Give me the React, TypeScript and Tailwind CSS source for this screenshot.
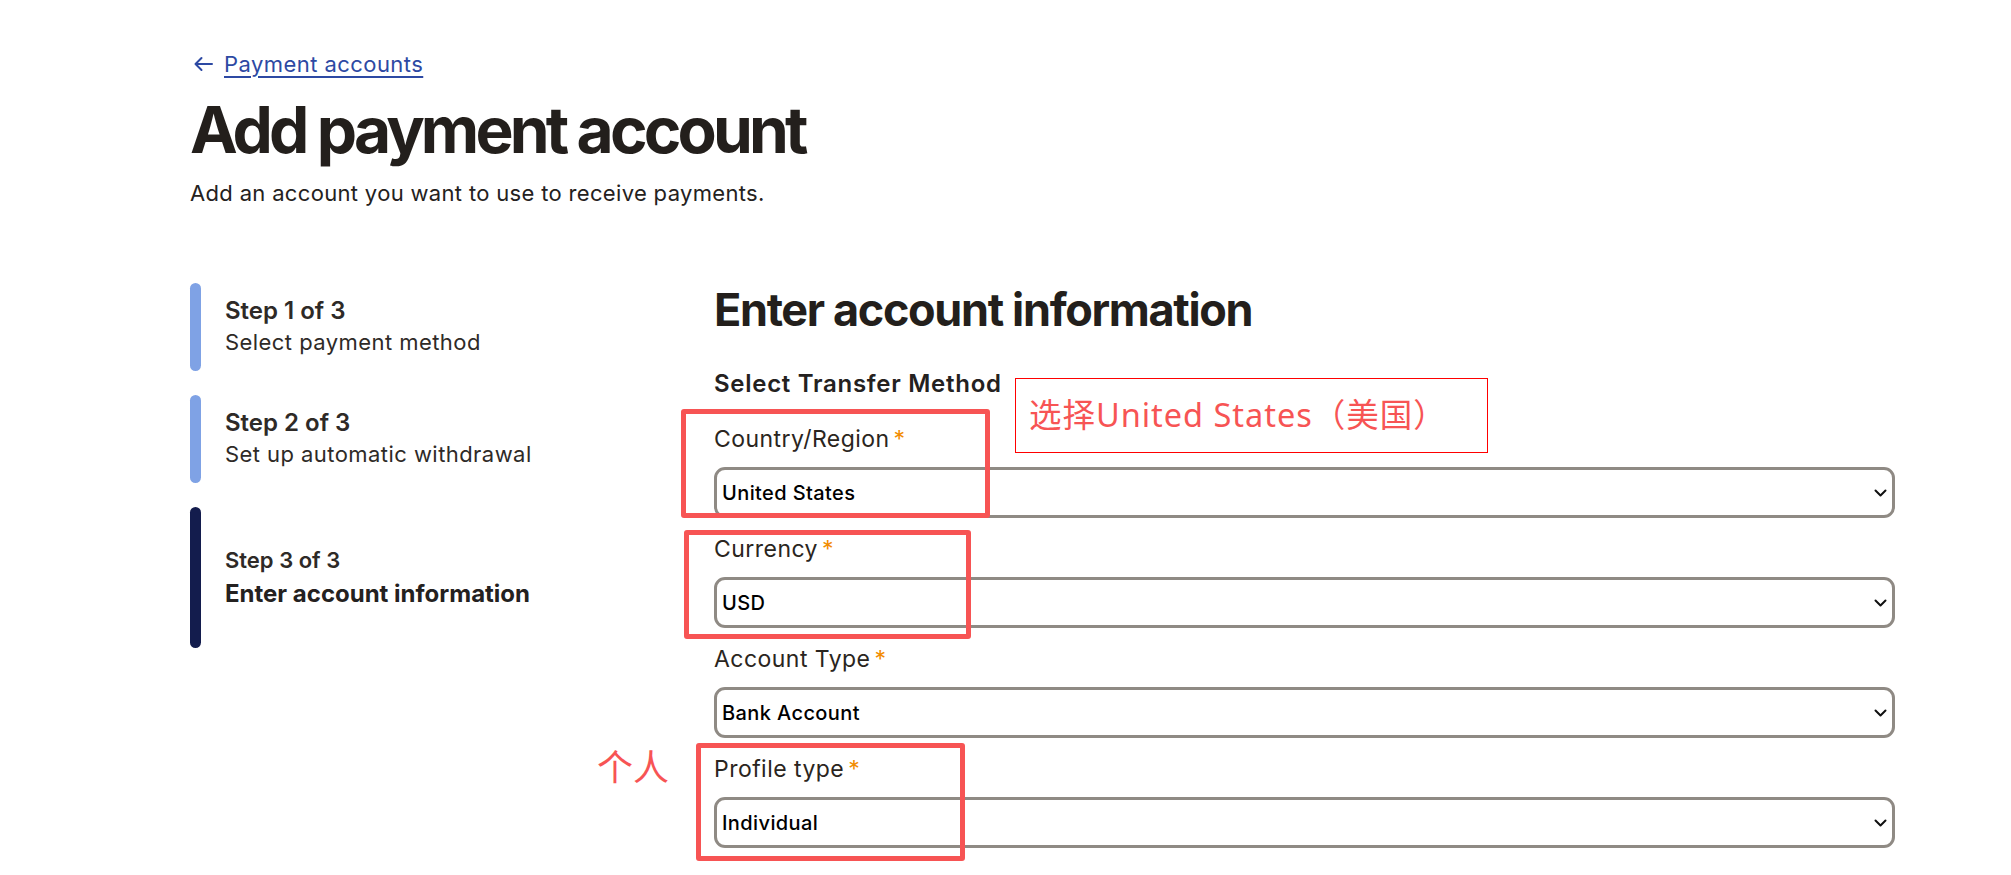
import React from 'react';

const STEPS = [
  { title: 'Step 1 of 3', desc: 'Select payment method', done: true },
  { title: 'Step 2 of 3', desc: 'Set up automatic withdrawal', done: true },
];

function BackArrow() {
  return (
    <svg width="20" height="16" viewBox="0 0 20 16" fill="none">
      <path d="M19 8H2.5M8.5 2L2.5 8l6 6" stroke="#2d49a3" strokeWidth="2" strokeLinecap="round" strokeLinejoin="round" />
    </svg>
  );
}

function Chevron() {
  return (
    <svg width="13" height="8" viewBox="0 0 13 8" fill="none">
      <path d="M1.5 1.5l5 5 5-5" stroke="#111" strokeWidth="2" strokeLinecap="round" strokeLinejoin="round" />
    </svg>
  );
}

interface FieldProps {
  label: string;
  value: string;
  children?: React.ReactNode;
}

const Field: React.FC<FieldProps> = ({ label, value, children }) => (
  <div className="relative">
    <div className="text-[23px] leading-[30px] tracking-[0.02em] text-[#2a2520]">
      {label}
      <span className="ml-[4px] text-[#f28c00]">*</span>
    </div>
    <div className="mt-[13px] h-[51px] rounded-[11px] border-[3px] border-[#8f8a84] bg-white flex items-center justify-between pl-[5px] pr-[5px] text-[20px] font-medium tracking-[0.02em] text-black">
      <span>{value}</span>
      <Chevron />
    </div>
    {children}
  </div>
);

// red marks drawn over the screenshot
const Mark: React.FC<{ className: string }> = ({ className }) => (
  <div className={'pointer-events-none absolute rounded-[3px] border-[5px] border-[#f75454] ' + className} />
);

export default function App() {
  return (
    <div className="min-h-screen bg-white font-['Inter','Noto_Sans','Noto_Sans_CJK_SC',sans-serif] text-[#242120]">
      <div className="pl-[190px] pt-[49px]">
        <a href="#" className="flex items-center gap-[11px] text-[22px] leading-[30px] tracking-[0.02em] text-[#2d49a3]">
          <span className="pl-[3px]"><BackArrow /></span>
          <span className="underline decoration-[2px] underline-offset-[4px]">Payment accounts</span>
        </a>
        <h1 className="mt-[11px] text-[64px] leading-[80px] font-bold tracking-[-0.06em] text-[#231f1c]">Add payment account</h1>
        <p className="mt-[8px] text-[22px] leading-[30px] tracking-[0.015em]">Add an account you want to use to receive payments.</p>

        <div className="mt-[75px] flex">
          {/* Steps */}
          <aside className="w-[524px] shrink-0 flex flex-col gap-[24px]">
            {STEPS.map((s) => (
              <div key={s.title} className="flex h-[88px]">
                <div className="w-[11px] rounded-full bg-[#7fa2e5]" />
                <div className="pl-[24px] flex flex-col justify-center">
                  <div className="text-[24px] leading-[31px] font-semibold text-[#2e2a27]">{s.title}</div>
                  <div className="text-[22px] leading-[33px] tracking-[0.02em] text-[#2e2a27]">{s.desc}</div>
                </div>
              </div>
            ))}
            <div className="flex h-[141px]">
              <div className="w-[11px] rounded-full bg-[#131c4d]" />
              <div className="pl-[24px] flex flex-col justify-center">
                <div className="text-[22px] leading-[32px] font-semibold text-[#2e2a27]">Step 3 of 3</div>
                <div className="text-[24px] leading-[36px] font-bold text-[#242120]">Enter account information</div>
              </div>
            </div>
          </aside>

          {/* Form */}
          <main className="w-[1181px] shrink-0">
            <h2 className="text-[45px] leading-[54px] font-bold tracking-[-0.03em] text-[#231f1c]">Enter account information</h2>
            <h3 className="mt-[32px] text-[24px] leading-[30px] font-semibold tracking-[0.03em]">Select Transfer Method</h3>
            <div className="mt-[25px] flex flex-col gap-[16px]">
              <Field label="Country/Region" value="United States">
                <Mark className="-left-[33px] -top-[15px] w-[309px] h-[109px]" />
                <div className="pointer-events-none absolute left-[301px] -top-[46px] w-[473px] h-[75px] border border-[#ff0000] flex items-center pl-[13px] font-['Noto_Sans','Noto_Sans_CJK_SC',sans-serif] text-[32.5px] tracking-[0.03em] text-[#f75454]">
                  选择United States（美国）
                </div>
              </Field>
              <Field label="Currency" value="USD">
                <Mark className="-left-[30px] -top-[4px] w-[287px] h-[109px]" />
              </Field>
              <Field label="Account Type" value="Bank Account" />
              <Field label="Profile type" value="Individual">
                <Mark className="-left-[18px] -top-[11px] w-[269px] h-[118px]" />
                <span className="pointer-events-none absolute -left-[117px] -top-[7px] font-['Noto_Sans_CJK_SC',sans-serif] text-[36px] leading-[36px] text-[#f75454]">
                  个人
                </span>
              </Field>
            </div>
          </main>
        </div>
      </div>
    </div>
  );
}
